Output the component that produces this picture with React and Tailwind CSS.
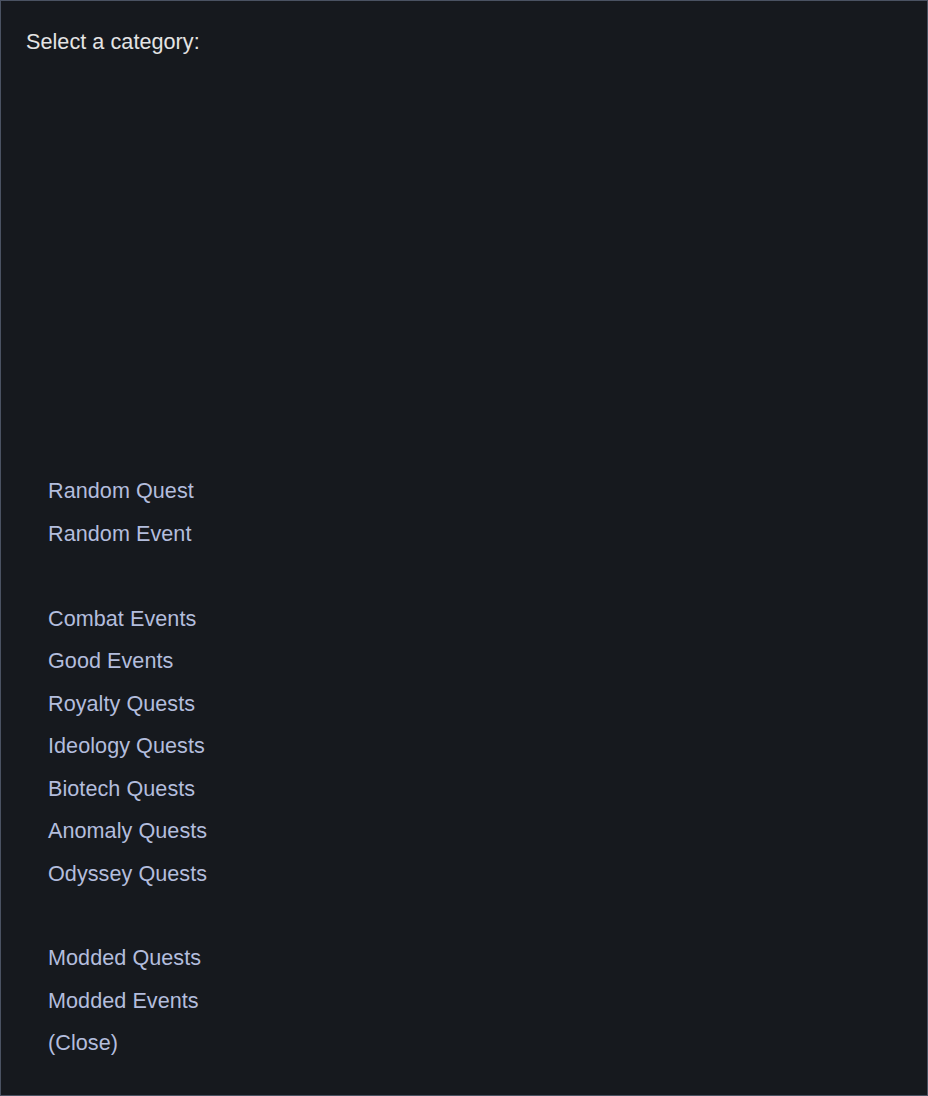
export default function App() {
  const groups = [
    ["Random Quest", "Random Event"],
    ["Combat Events", "Good Events", "Royalty Quests", "Ideology Quests", "Biotech Quests", "Anomaly Quests", "Odyssey Quests"],
    ["Modded Quests", "Modded Events", "(Close)"],
  ];
  return (
    <div
      className="w-[928px] h-[1096px] bg-[#16191e] border border-[#4a5262] overflow-hidden"
      style={{ fontFamily: '"Liberation Sans", Arial, sans-serif' }}
    >
      <div className="pl-[25px] pt-[20px] text-[21.6px] leading-[42.46px] text-[#e4e4e4] tracking-[0.05px]">
        Select a category:
      </div>
      <div className="mt-[407px] pl-[47px] flex flex-col">
        {groups.map((g, gi) => (
          <div key={gi} className={gi > 0 ? "mt-[42.46px] flex flex-col" : "flex flex-col"}>
            {g.map((t) => (
              <div key={t} className="text-[21.6px] leading-[42.46px] text-[#b3bddd] cursor-pointer tracking-[0.05px]">
                {t}
              </div>
            ))}
          </div>
        ))}
      </div>
    </div>
  );
}
